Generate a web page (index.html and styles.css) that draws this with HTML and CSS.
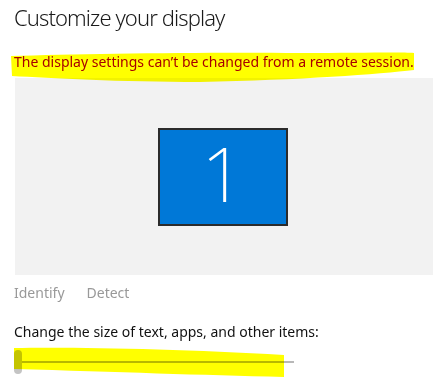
FILE: index.html
```html
<!DOCTYPE html>
<html lang="en">
<head>
    <meta charset="UTF-8">
    <meta name="viewport" content="width=device-width, initial-scale=1.0">
    <title>Customize your display</title>
    <link rel="stylesheet" href="styles.css">
</head>
<body>
    <div class="page">
        <h1>Customize your display</h1>
        <p class="warning">The display settings can&#8217;t be changed from a remote session.</p>

        <div class="preview">
            <div class="monitor">1</div>
        </div>

        <div class="links">
            <span class="link">Identify</span>
            <span class="link">Detect</span>
        </div>

        <p class="label">Change the size of text, apps, and other items:</p>
        <div class="slider">
            <div class="thumb"></div>
            <div class="track"></div>
        </div>

        <!-- highlighter marks drawn over the screenshot -->
        <svg class="marker" width="439" height="387" viewBox="0 0 439 387">
            <path d="M11 56 C 80 54, 200 52, 300 53 C 360 53, 400 52, 414 53 L 414 70 C 380 74, 300 80, 200 82 C 120 82, 50 78, 12 76 Z" />
            <path d="M14 348 C 80 347, 180 349, 284 355 L 284 377 C 200 375, 120 372, 14 369 Z" />
        </svg>
    </div>
</body>
</html>
```

FILE: styles.css
```css
body {
    margin: 0;
    background-color: #ffffff;
    font-family: "Noto Sans", "Open Sans", Arial, sans-serif;
}
.page {
    position: relative;
    width: 439px;
    height: 387px;
    padding: 0 6px 0 14px;
    box-sizing: border-box;
    overflow: hidden;
}
h1 {
    margin: 0;
    padding-top: 2px;
    font-size: 22px;
    font-weight: 300;
    letter-spacing: -0.9px;
    line-height: 30px;
    color: #1a1a1a;
}
.warning {
    margin: 20px 0 0;
    font-size: 14px;
    line-height: 20px;
    color: #a80000;
}
.preview {
    display: flex;
    justify-content: center;
    align-items: center;
    margin: 6px 0 0 1px;
    width: 418px;
    height: 197px;
    background-color: #f2f2f2;
}
.monitor {
    display: flex;
    justify-content: center;
    align-items: center;
    width: 126px;
    height: 86px;
    padding-bottom: 8px;
    margin-left: -2px;
    border: 2px solid #2b2b2b;
    background-color: #0078d7;
    color: #ffffff;
    font-size: 76px;
    font-weight: 200;
    line-height: 1;
}
.links {
    display: flex;
    gap: 22px;
    margin-top: 8px;
    font-size: 14px;
    line-height: 20px;
    color: #999999;
}
.label {
    margin: 19px 0 0;
    font-size: 14px;
    line-height: 20px;
    color: #111111;
}
.slider {
    display: flex;
    align-items: center;
    margin-top: 8px;
    width: 280px;
    height: 24px;
}
.thumb {
    width: 8px;
    height: 24px;
    border-radius: 4px;
    background-color: #c4c4c4;
}
.track {
    flex: 1;
    height: 2px;
    background-color: #b8b8b8;
}
.marker {
    position: absolute;
    left: 0;
    top: 0;
    mix-blend-mode: multiply;
    pointer-events: none;
}
.marker path {
    fill: #ffff00;
}
```
